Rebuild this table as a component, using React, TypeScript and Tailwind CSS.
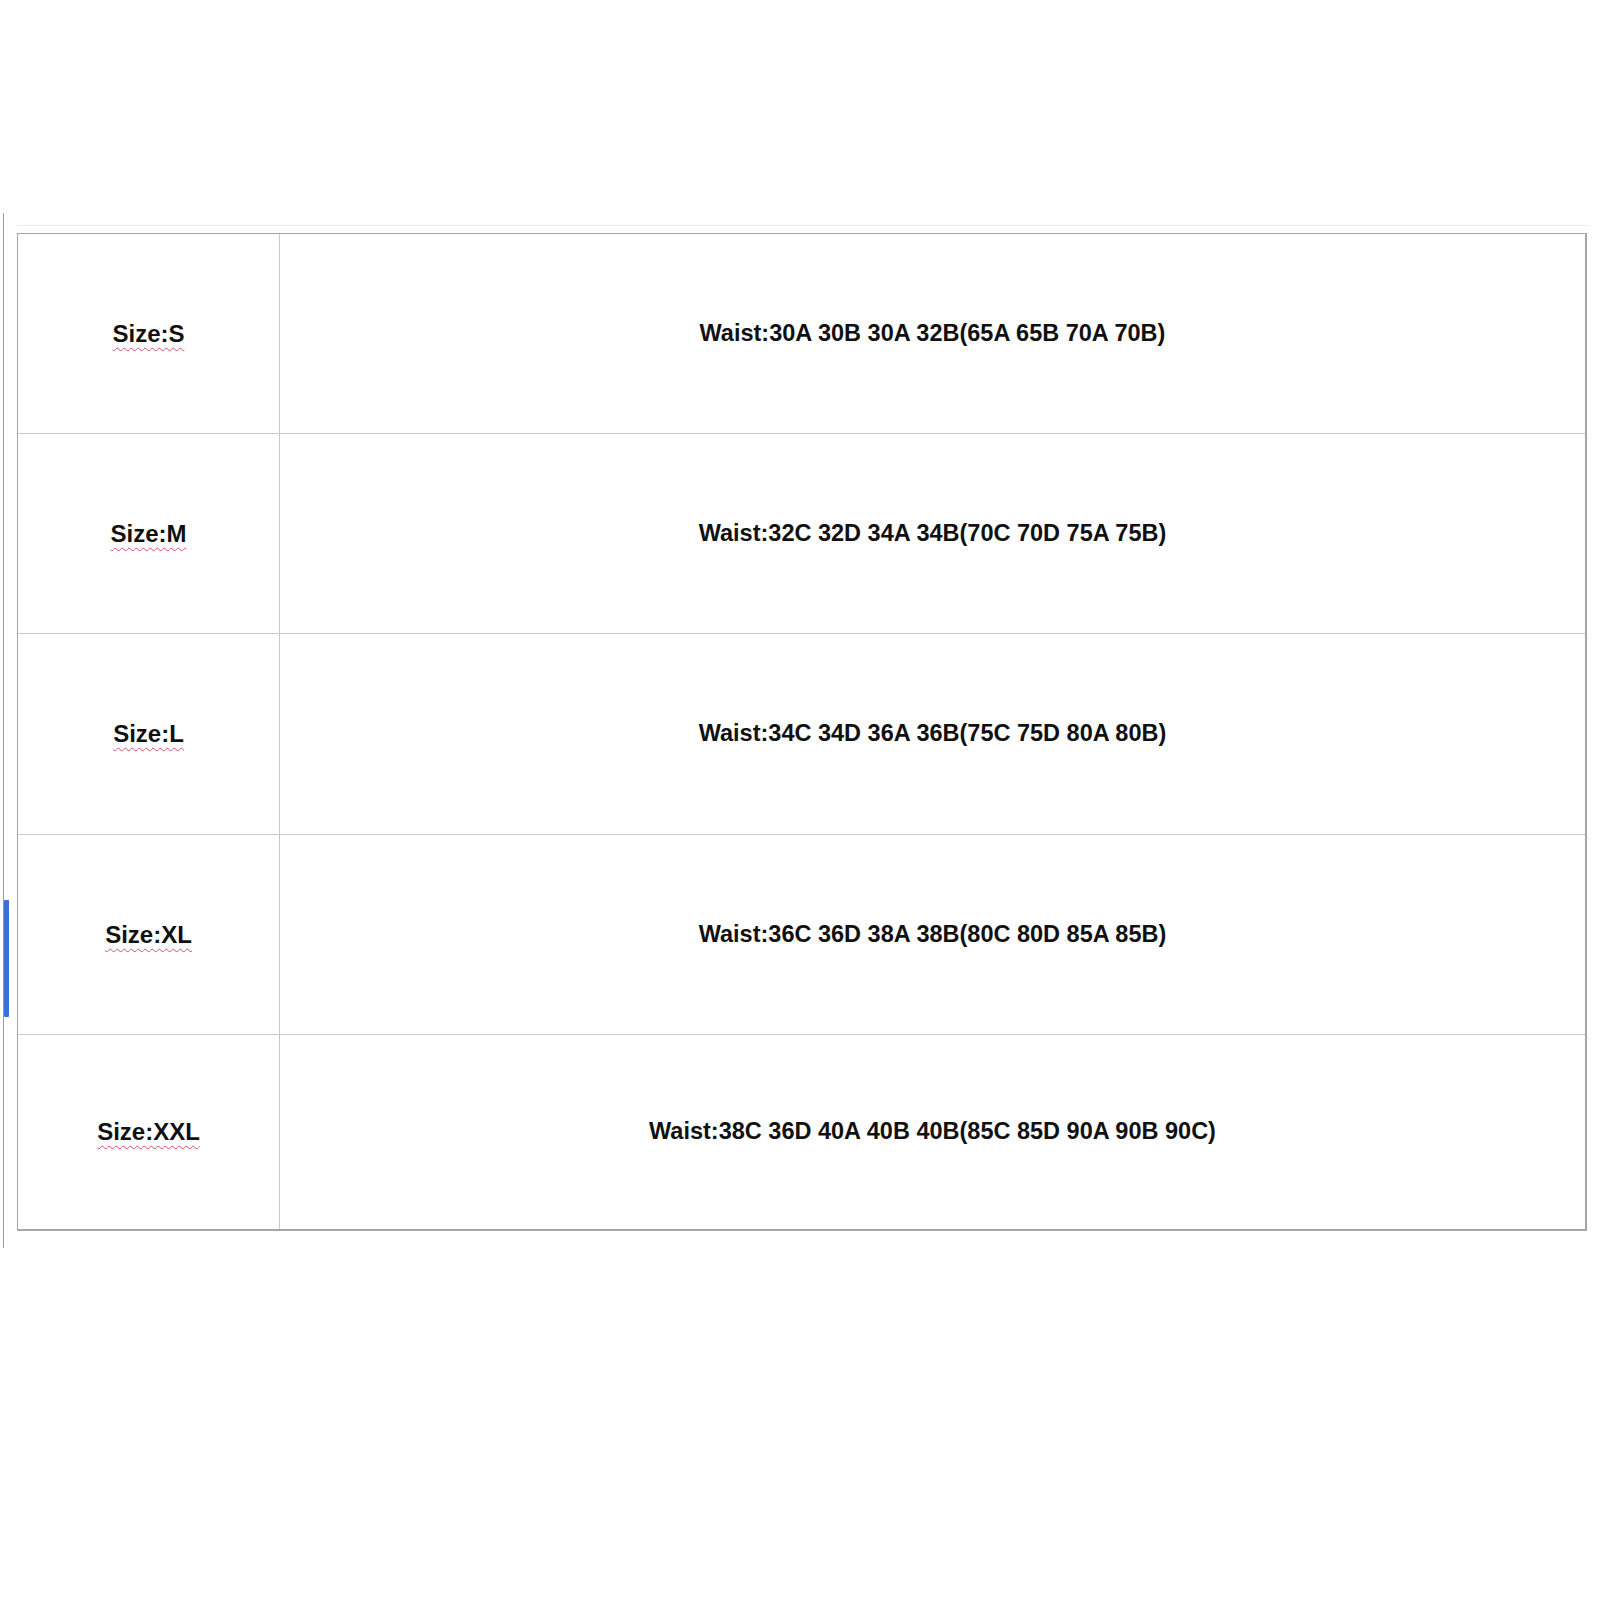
const rows = [
  { size: "Size:S", waist: "Waist:30A 30B 30A 32B(65A 65B 70A 70B)", h: "h-[199px]" },
  { size: "Size:M", waist: "Waist:32C 32D 34A 34B(70C 70D 75A 75B)", h: "h-[200px]" },
  { size: "Size:L", waist: "Waist:34C 34D 36A 36B(75C 75D 80A 80B)", h: "h-[201px]" },
  { size: "Size:XL", waist: "Waist:36C 36D 38A 38B(80C 80D 85A 85B)", h: "h-[200px]" },
  { size: "Size:XXL", waist: "Waist:38C 36D 40A 40B 40B(85C 85D 90A 90B 90C)", h: "h-[195px]" },
];

export default function App() {
  return (
    <div className="w-[1600px] h-[1600px] bg-white pt-[213px] font-['Liberation_Sans',Arial,sans-serif] text-[#111]">
      <div className="flex items-start ml-[3px]">
        {/* editor gutter */}
        <div className="w-[14px] h-[1035px] border-l border-[#9a9a9a] shrink-0">
          <div className="mt-[687px] w-[5px] h-[117px] bg-[#3b6fdc] rounded-[1px]" />
        </div>

        {/* size table */}
        <div className="mt-[12px] pt-[7px] border-t border-[#ececec] w-[1572px]">
          <div className="w-[1570px] border border-[#a6a6a6] border-b-2 border-r-2">
            {rows.map((row, i) => (
              <div
                key={row.size}
                className={`grid grid-cols-[262px_1fr] ${row.h} ${i > 0 ? "border-t border-[#c8c8c8]" : ""}`}
              >
                <div className="flex items-center justify-center border-r border-[#c8c8c8]">
                  <span className="text-[24px] font-bold underline decoration-wavy decoration-[#d0506a] decoration-1 underline-offset-[5px]">
                    {row.size}
                  </span>
                </div>
                <div className="flex items-center justify-center">
                  <span className="text-[23.5px] font-bold">{row.waist}</span>
                </div>
              </div>
            ))}
          </div>
        </div>
      </div>
    </div>
  );
}
